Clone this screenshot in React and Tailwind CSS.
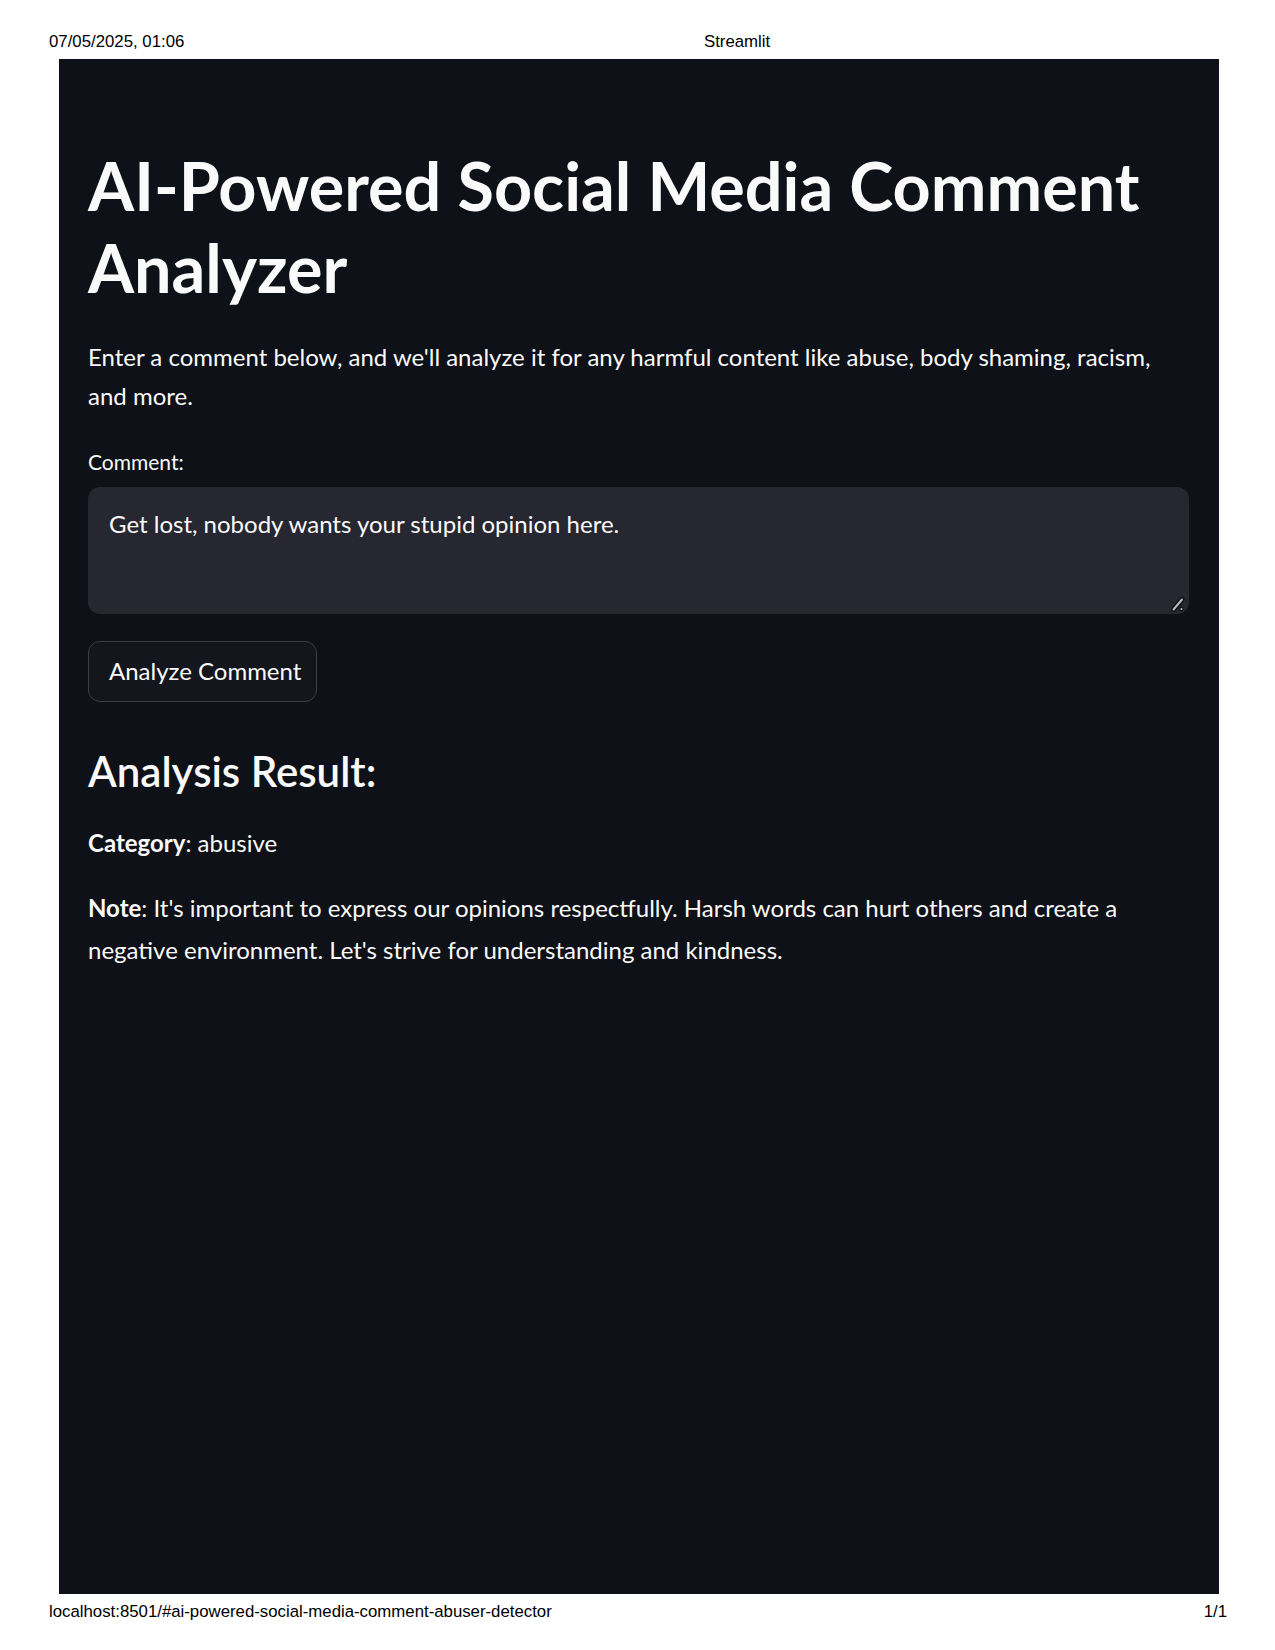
const sans = "font-['Lato',sans-serif]"

export default function App() {
  return (
    <div className="w-[1275px] h-[1650px] bg-white flex flex-col">
      {/* print header */}
      <div className="h-[59px] pt-[32px] pl-[49px] flex text-[16.8px] leading-[19px] text-black font-['Liberation_Sans',Arial,sans-serif]">
        <span className="w-[655px]">07/05/2025, 01:06</span>
        <span>Streamlit</span>
      </div>

      {/* streamlit page */}
      <div className={`ml-[59px] w-[1160px] h-[1535px] bg-[#0e1117] text-[#fafafa] pl-[29px] pr-[30px] pt-[85px] ${sans}`}>
        <h1 className="text-[66.5px] leading-[82px] font-bold">AI-Powered Social Media Comment Analyzer</h1>

        <p className="mt-[29px] text-[24px] leading-[39px]">
          Enter a comment below, and we'll analyze it for any harmful content like abuse, body shaming, racism, and more.
        </p>

        <div className="mt-[35px] text-[21px] leading-[24px]">Comment:</div>
        <div className="mt-[13px] relative h-[127px] rounded-[12px] bg-[#262730] px-[21px] pt-[19px] text-[24px] leading-[36px]">
          Get lost, nobody wants your stupid opinion here.
          <svg className="absolute right-[3px] bottom-[2px]" width="16" height="16" viewBox="0 0 16 16">
            <path d="M3.5 13.5 L12 3.5" stroke="#0e1117" strokeWidth="5" strokeLinecap="round" />
            <path d="M3.5 13.5 L12 3.5" stroke="#b9b9be" strokeWidth="2" strokeLinecap="round" />
            <circle cx="11.5" cy="13" r="2.2" fill="#0e1117" />
            <circle cx="11.5" cy="13" r="1.1" fill="#b9b9be" />
          </svg>
        </div>

        <button className="mt-[27px] h-[61px] w-[229px] rounded-[12px] border border-[#3b3e46] bg-[#13161d] text-left pl-[20px] pb-[2px] text-[24px] leading-[36px] text-[#fafafa]">
          Analyze Comment
        </button>

        <h3 className="mt-[43px] text-[42px] leading-[52px] font-semibold">Analysis Result:</h3>

        <p className="mt-[26px] text-[24px] leading-[39px]">
          <strong className="font-bold">Category</strong>: abusive
        </p>
        <p className="mt-[25px] text-[24px] leading-[41.5px]">
          <strong className="font-bold">Note</strong>: It's important to express our opinions respectfully. Harsh words can hurt others and create a negative environment. Let's strive for understanding and kindness.
        </p>
      </div>

      {/* print footer */}
      <div className="h-[31px] pt-[8px] pl-[49px] pr-[48px] flex justify-between text-[16.8px] leading-[19px] text-black font-['Liberation_Sans',Arial,sans-serif]">
        <span>localhost:8501/#ai-powered-social-media-comment-abuser-detector</span>
        <span>1/1</span>
      </div>
    </div>
  )
}
